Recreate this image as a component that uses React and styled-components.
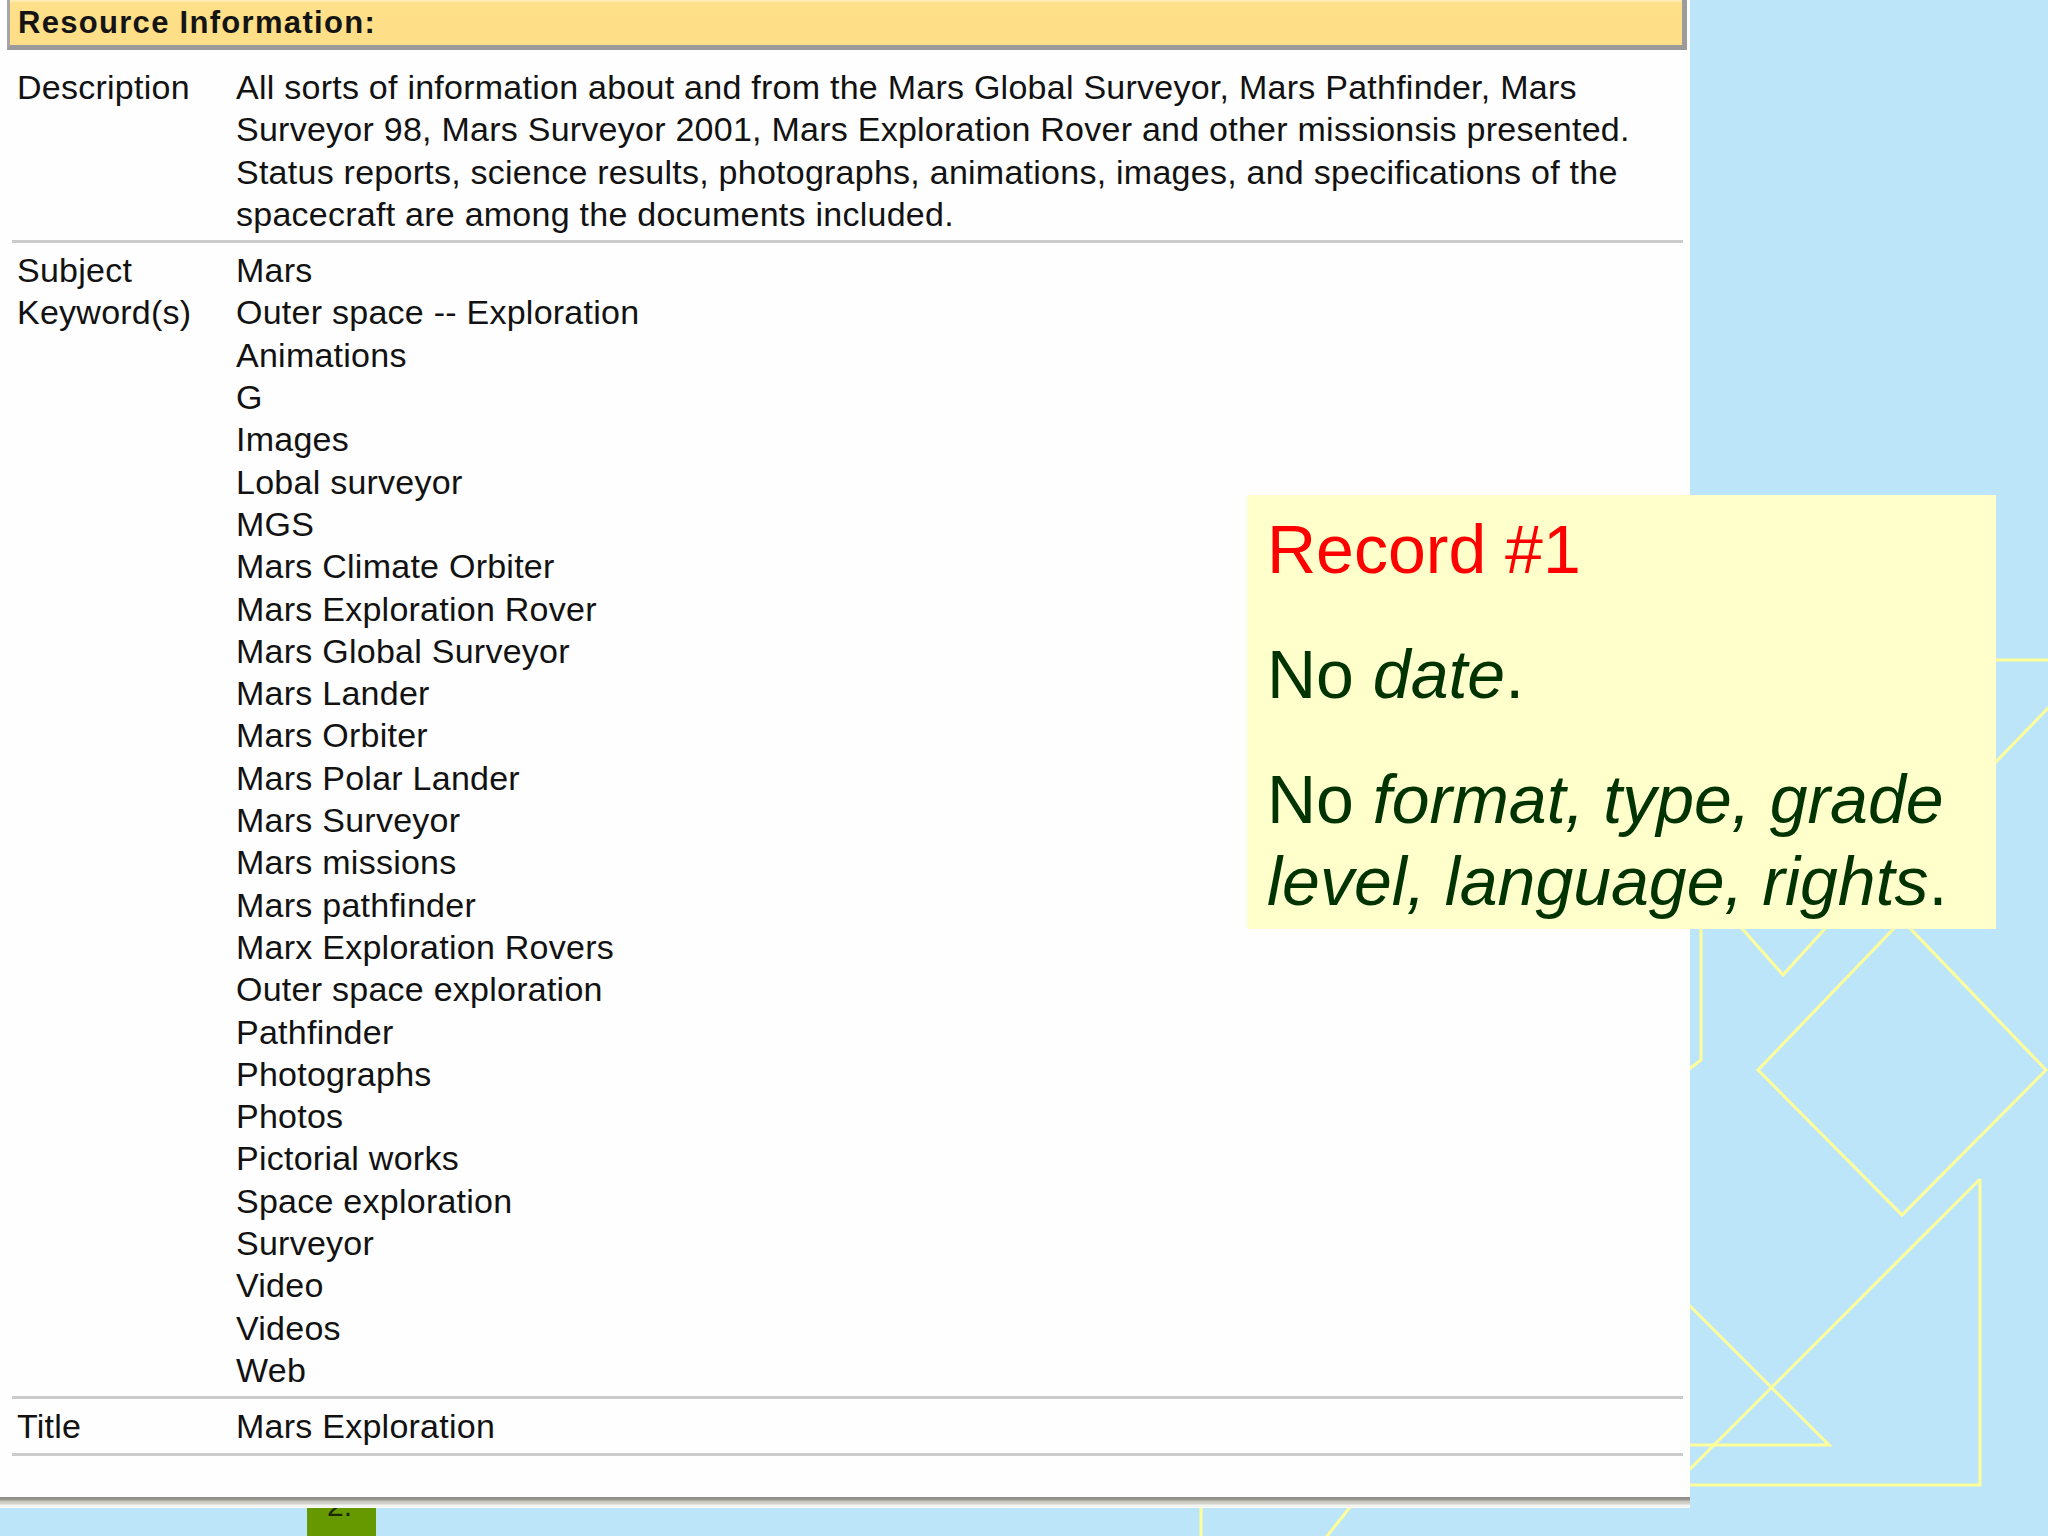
import React from 'react';
import styled, { createGlobalStyle } from 'styled-components';

const keywords = [
  'Mars',
  'Outer space -- Exploration',
  'Animations',
  'G',
  'Images',
  'Lobal surveyor',
  'MGS',
  'Mars Climate Orbiter',
  'Mars Exploration Rover',
  'Mars Global Surveyor',
  'Mars Lander',
  'Mars Orbiter',
  'Mars Polar Lander',
  'Mars Surveyor',
  'Mars missions',
  'Mars pathfinder',
  'Marx Exploration Rovers',
  'Outer space exploration',
  'Pathfinder',
  'Photographs',
  'Photos',
  'Pictorial works',
  'Space exploration',
  'Surveyor',
  'Video',
  'Videos',
  'Web',
];

const description = [
  'All sorts of information about and from the Mars Global Surveyor, Mars Pathfinder, Mars',
  'Surveyor 98, Mars Surveyor 2001, Mars Exploration Rover and other missionsis presented.',
  'Status reports, science results, photographs, animations, images, and specifications of the',
  'spacecraft are among the documents included.',
];

const App = () => {
  return (
    <>
      <GlobalStyle />
      <Slide>
        {/* slide background shapes */}
        <Decor viewBox="0 0 2048 1536" width="2048" height="1536">
          <g fill="none" stroke="#FFFF99" strokeWidth="3">
            <polyline points="1701,900 1701,1060 1680,1076" />
            <polyline points="1708,890 1783,975 1860,890" />
            <polygon points="1902,920 1758,1070 1902,1215 2046,1070" />
            <line x1="1990" y1="660" x2="2048" y2="660" />
            <line x1="1990" y1="768" x2="2052" y2="704" />
            <polyline points="1980,1179 1980,1485 1680,1485" />
            <line x1="1980" y1="1179" x2="1670" y2="1489" />
            <polyline points="1680,1296 1829,1445 1680,1445" />
            <line x1="1201" y1="1490" x2="1201" y2="1540" />
            <line x1="1362" y1="1492" x2="1324" y2="1540" />
          </g>
        </Decor>

        <PageTab>
          <PageNum>2.</PageNum>
        </PageTab>

        <Panel>
          <Sheet>
            <HeaderBar>Resource Information:</HeaderBar>
            <Table>
              <Row>
                <Label>Description</Label>
                <Value>
                  {description.map((line) => (
                    <Line key={line}>{line}</Line>
                  ))}
                </Value>
              </Row>
              <Rule />
              <Row>
                <Label>
                  <Line>Subject</Line>
                  <Line>Keyword(s)</Line>
                </Label>
                <Value>
                  {keywords.map((k) => (
                    <Line key={k}>{k}</Line>
                  ))}
                </Value>
              </Row>
              <Rule />
              <Row>
                <Label>Title</Label>
                <Value>Mars Exploration</Value>
              </Row>
              <Rule />
            </Table>
          </Sheet>
          <SheetShadow />
        </Panel>

        <Note>
          <NotePara $red>Record #1</NotePara>
          <NotePara>
            No <em>date</em>.
          </NotePara>
          <NotePara>
            <NoteLine>
              No <em>format, type, grade</em>
            </NoteLine>
            <NoteLine>
              <em>level, language, rights</em>.
            </NoteLine>
          </NotePara>
        </Note>
      </Slide>
    </>
  );
};

export default App;

const GlobalStyle = createGlobalStyle`
  html, body {
    margin: 0;
    padding: 0;
    background: #bce5f9;
  }
  body {
    font-family: "Liberation Sans", Arial, sans-serif;
  }
`;

const Slide = styled.div`
  position: relative;
  width: 2048px;
  height: 1536px;
  overflow: hidden;
  background: #bce5f9;
`;

const Decor = styled.svg`
  position: absolute;
  left: 0;
  top: 0;
  z-index: 0;
`;

const PageTab = styled.div`
  position: absolute;
  left: 307px;
  top: 1490px;
  width: 69px;
  height: 46px;
  background: #669900;
  overflow: hidden;
  z-index: 0;
`;

const PageNum = styled.div`
  padding: 0 0 0 20px;
  font-size: 30px;
  line-height: 30px;
  margin-top: 1px;
  color: #1a2a00;
`;

const Panel = styled.div`
  position: relative;
  z-index: 1;
  width: 1690px;
  height: 1508px;
  display: flex;
  flex-direction: column;
`;

const Sheet = styled.div`
  flex: 1;
  background: #fefefe;
`;

const SheetShadow = styled.div`
  height: 11px;
  background: linear-gradient(
    to bottom,
    #8c8c84 0px,
    #9a9a92 3px,
    #c4c4bc 4px,
    #d6d6d0 7px,
    #f2f2ee 8px,
    #f8f8f6 11px
  );
`;

const HeaderBar = styled.div`
  margin-left: 7px;
  width: 1680px;
  height: 50px;
  box-sizing: border-box;
  background: linear-gradient(to bottom, #fff0c0 0px, #fee08a 3px, #fedf87 100%);
  border-left: 3px solid #a6a6a6;
  border-right: 5px solid #9c9c9c;
  border-bottom: 5px solid #9a9a9a;
  padding-left: 8px;
  font-size: 31px;
  font-weight: 700;
  letter-spacing: 1.3px;
  line-height: 45px;
  color: #141414;
`;

const Table = styled.div`
  padding: 10px 7px 0 12px;
  font-size: 34px;
  line-height: 42.3px;
  letter-spacing: 0.25px;
  color: #121212;
`;

const Row = styled.div`
  display: flex;
  padding: 6px 0 5px;
`;

const Label = styled.div`
  width: 224px;
  flex: none;
  padding-left: 5px;
  box-sizing: border-box;
  white-space: nowrap;
`;

const Value = styled.div`
  flex: 1;
  white-space: nowrap;
`;

const Line = styled.div``;

const Rule = styled.div`
  height: 3px;
  background: #cbcbcb;
`;

const Note = styled.div`
  position: absolute;
  z-index: 2;
  left: 1247px;
  top: 495px;
  width: 749px;
  height: 434px;
  box-sizing: border-box;
  padding: 13px 20px 7px;
  background: #ffffcc;
  font-family: "Liberation Sans", Arial, sans-serif;
  font-size: 68px;
  line-height: 82px;
  color: #003300;
`;

const NotePara = styled.div`
  margin: 0 0 43px;
  color: ${(p) => (p.$red ? '#ff0000' : '#003300')};

  em {
    font-style: italic;
  }
`;

const NoteLine = styled.div`
  white-space: nowrap;
`;
